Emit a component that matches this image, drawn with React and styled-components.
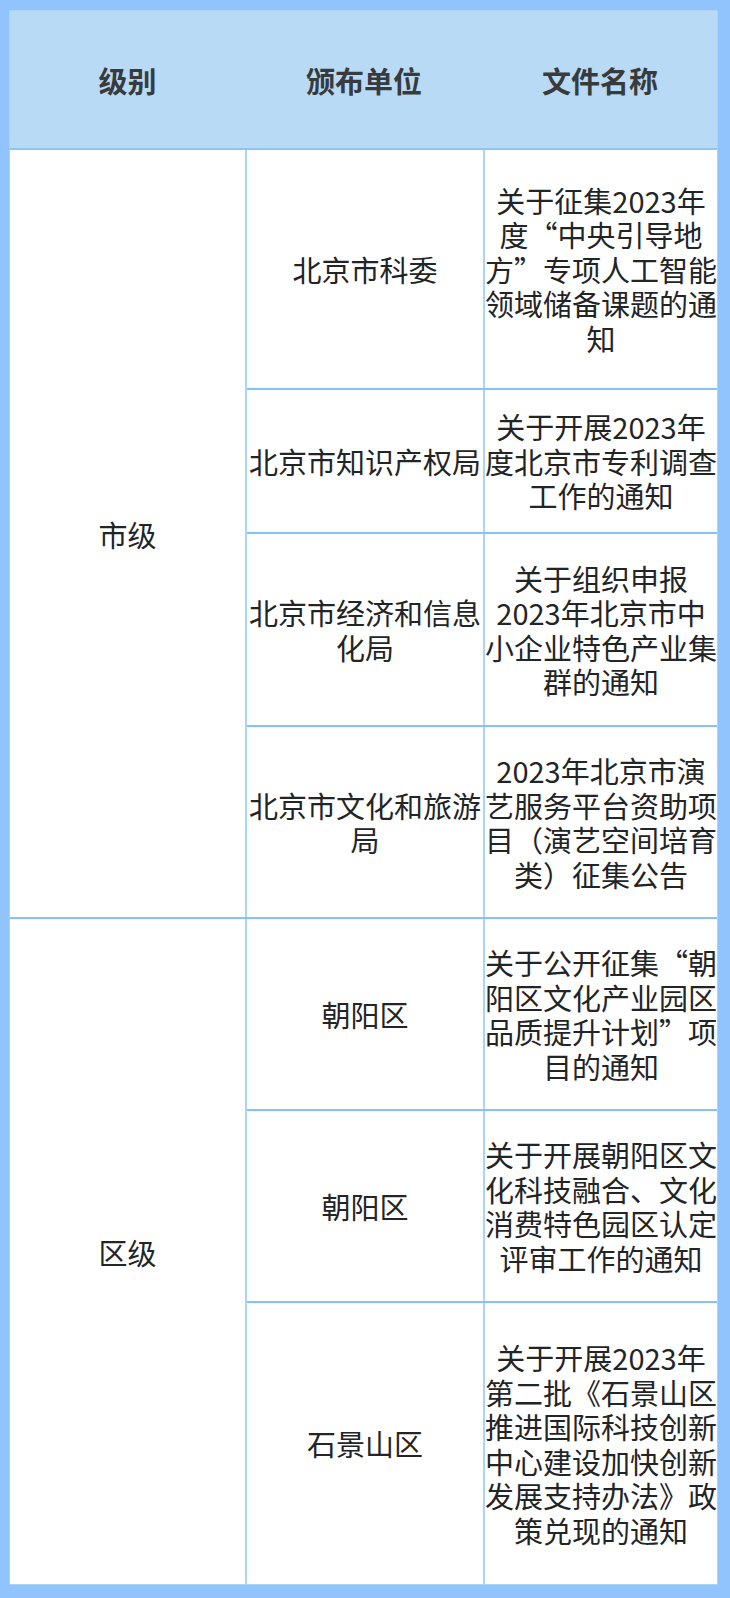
import React from "react";
import styled, { createGlobalStyle } from "styled-components";

const Global = createGlobalStyle`
  html, body { margin: 0; padding: 0; background: #91c4fc; }
  body { font-family: "Noto Sans CJK SC", "Noto Sans", sans-serif; }
`;

const Page = styled.div`
  width: 730px;
  min-height: 1598px;
  box-sizing: border-box;
  background: #91c4fc;
  padding: 10px 12px 13px 9px;
`;

const Table = styled.div`
  width: 709px;
  background: #ffffff;
  border: 1px solid #a9d4f6;
  box-sizing: border-box;
  display: flex;
  flex-direction: column;
`;

const HeaderRow = styled.div`
  display: grid;
  grid-template-columns: 235px 238px 1fr;
  height: 139px;
  background: #b9daf4;
  border-bottom: 2px solid #8cc6f1;
  box-sizing: border-box;
`;

const HeadCell = styled.div`
  display: flex;
  align-items: center;
  justify-content: center;
  font-size: 29px;
  font-weight: 700;
  color: #383b3e;
`;

const Group = styled.div`
  display: flex;
  border-bottom: ${(p) => (p.$last ? "none" : "2px solid #84c4f4")};
`;

const LevelCell = styled.div`
  width: 235px;
  flex: none;
  display: flex;
  align-items: center;
  justify-content: center;
  font-size: 29px;
  color: #222426;
  border-right: 2px solid #a9d6f5;
`;

const SubRows = styled.div`
  flex: 1;
  display: flex;
  flex-direction: column;
`;

const SubRow = styled.div`
  display: grid;
  grid-template-columns: 236px 1fr;
  height: ${(p) => p.$h}px;
  box-sizing: border-box;
  border-bottom: ${(p) => (p.$last ? "none" : "2px solid #84c4f4")};
`;

const Cell = styled.div`
  display: flex;
  align-items: center;
  justify-content: center;
  text-align: center;
  font-size: 29px;
  line-height: 34.5px;
  color: #222426;
  padding: 0;
  border-left: ${(p) => (p.$divider ? "2px solid #a9d6f5" : "none")};
`;

const groups = [
  {
    level: "市级",
    rows: [
      { unit: "北京市科委", name: "关于征集2023年度“中央引导地方”专项人工智能领域储备课题的通知", h: 240 },
      { unit: "北京市知识产权局", name: "关于开展2023年度北京市专利调查工作的通知", h: 144 },
      { unit: "北京市经济和信息化局", name: "关于组织申报2023年北京市中小企业特色产业集群的通知", h: 193 },
      { unit: "北京市文化和旅游局", name: "2023年北京市演艺服务平台资助项目（演艺空间培育类）征集公告", h: 190 },
    ],
  },
  {
    level: "区级",
    rows: [
      { unit: "朝阳区", name: "关于公开征集“朝阳区文化产业园区品质提升计划”项目的通知", h: 192 },
      { unit: "朝阳区", name: "关于开展朝阳区文化科技融合、文化消费特色园区认定评审工作的通知", h: 192 },
      { unit: "石景山区", name: "关于开展2023年第二批《石景山区推进国际科技创新中心建设加快创新发展支持办法》政策兑现的通知", h: 281 },
    ],
  },
];

export default function App() {
  return (
    <Page>
      <Global />
      <Table>
        <HeaderRow>
          <HeadCell>级别</HeadCell>
          <HeadCell>颁布单位</HeadCell>
          <HeadCell>文件名称</HeadCell>
        </HeaderRow>
        {groups.map((g, gi) => (
          <Group key={g.level} $last={gi === groups.length - 1}>
            <LevelCell>{g.level}</LevelCell>
            <SubRows>
              {g.rows.map((r, ri) => (
                <SubRow key={ri} $h={r.h} $last={ri === g.rows.length - 1}>
                  <Cell>{r.unit}</Cell>
                  <Cell $divider>{r.name}</Cell>
                </SubRow>
              ))}
            </SubRows>
          </Group>
        ))}
      </Table>
    </Page>
  );
}
